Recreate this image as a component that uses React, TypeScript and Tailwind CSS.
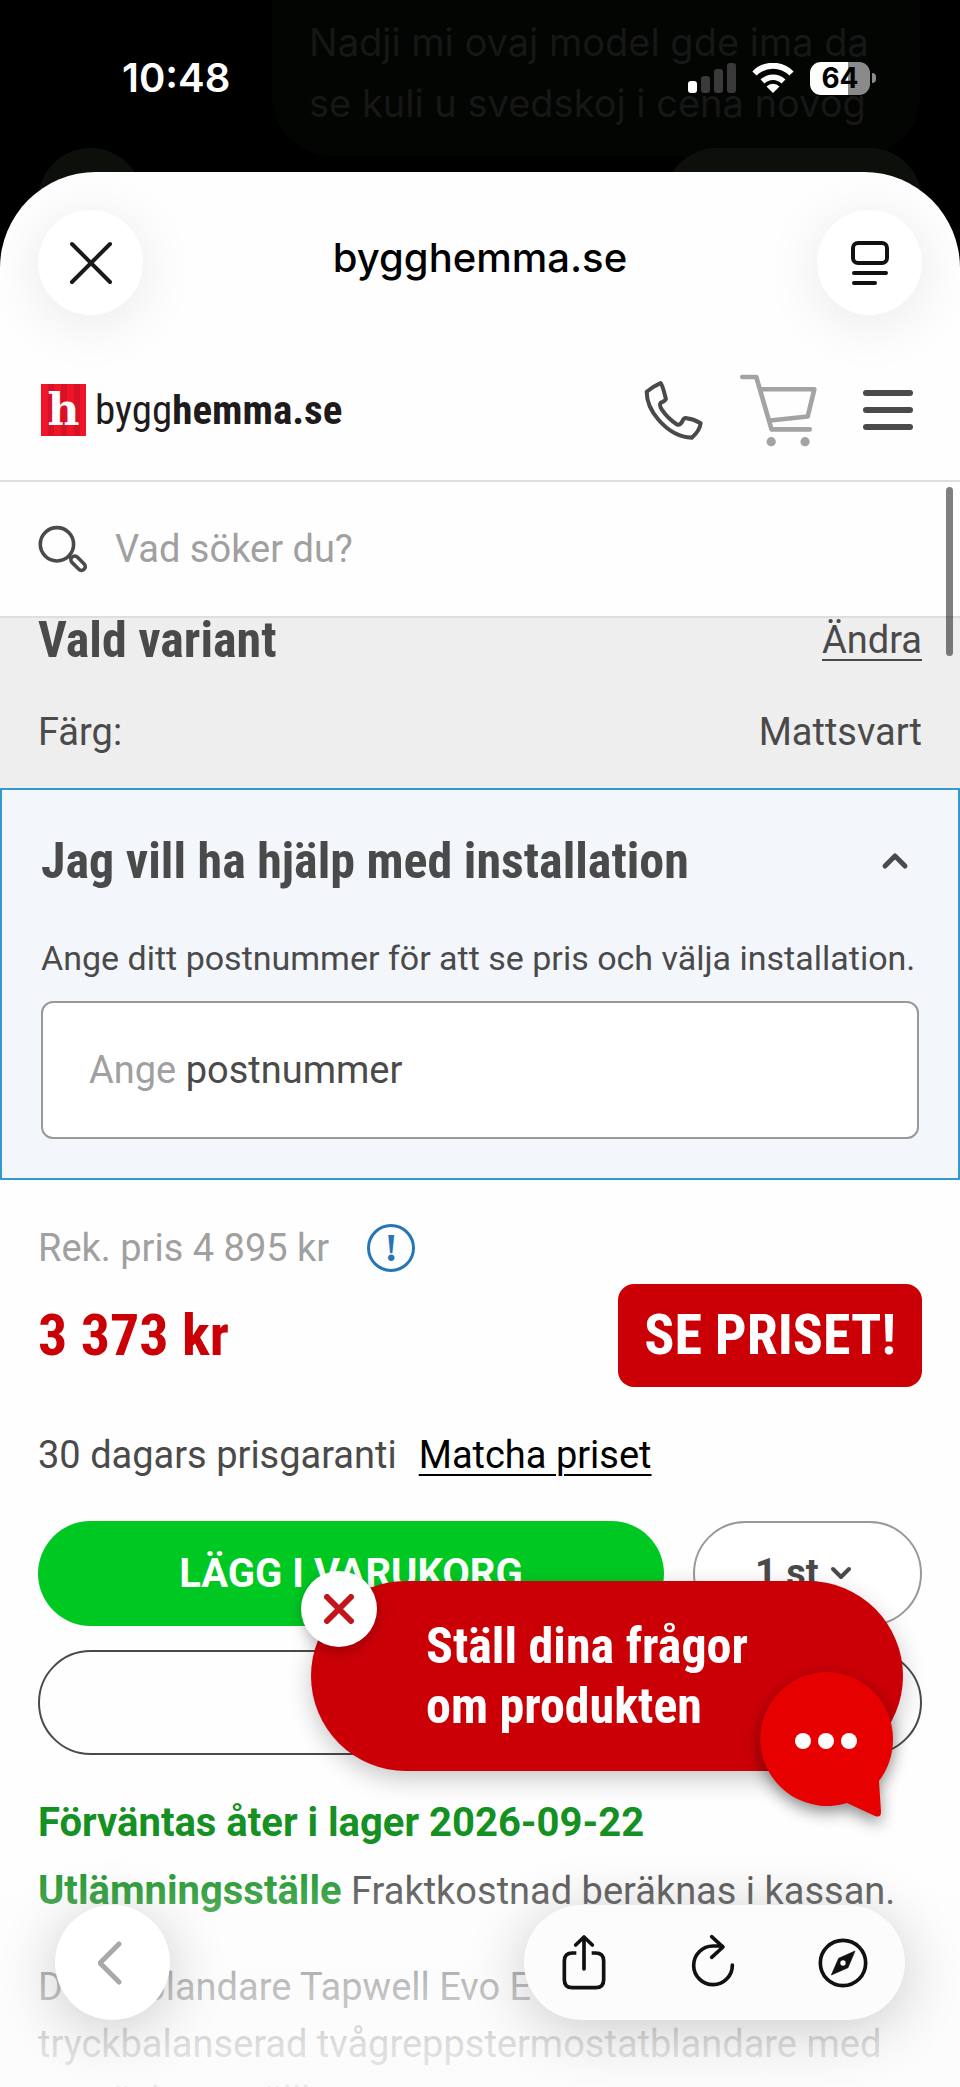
import type { ReactNode } from 'react';

const body = 'font-[Roboto,"Noto_Sans",sans-serif]';
const heading = 'font-["Roboto_Condensed",Roboto,sans-serif] font-bold';
const system = 'font-[Inter,Roboto,sans-serif]';

const backdropLines = ['Nadji mi ovaj model gde ima da', 'se kuli u svedskoj i cena novog'];

function StatusBar() {
  return (
    <div className={`${system} relative flex items-center justify-between pt-12 pr-[84px] pl-[122px] text-white`}>
      <span className="text-[40px] leading-[60px] font-semibold">10:48</span>
      <div className="flex items-center gap-4">
        <svg width="48" height="30" viewBox="0 0 48 30" aria-hidden="true">
          <rect x="0" y="18" width="9" height="12" rx="3" fill="#fff" />
          <rect x="13" y="13" width="9" height="17" rx="3" fill="#3a3a3a" />
          <rect x="26" y="6" width="9" height="24" rx="3" fill="#3a3a3a" />
          <rect x="39" y="0" width="9" height="30" rx="3" fill="#3a3a3a" />
        </svg>
        <svg width="42" height="30" viewBox="0 0 42 30" aria-hidden="true">
          <path d="M21 30l-6.500-6.500a9 9 0 0 1 13 0z" fill="#fff" />
          <path d="M10.500 18.500a15 15 0 0 1 21 0" fill="none" stroke="#fff" strokeWidth="5.500" />
          <path d="M2.500 10.500a26 26 0 0 1 37 0" fill="none" stroke="#fff" strokeWidth="6" />
        </svg>
        <div className="flex items-center gap-[2px]">
          <span className="h-[33px] w-[60px] rounded-[11px] bg-linear-to-r from-white from-64% to-[#8a8a8a] to-64% text-center text-[28px] leading-[33px] font-bold text-black">
            64
          </span>
          <span className="h-[10px] w-1 rounded-r-full bg-[#8a8a8a]" />
        </div>
      </div>
    </div>
  );
}

function Backdrop() {
  return (
    <div className={`${system} absolute inset-x-0 top-0 h-[300px] bg-black`} aria-hidden="true">
      <div className="mr-10 ml-[272px] rounded-b-[60px] bg-[#020502] px-[37px] pt-3 pb-[22px] text-[38px] leading-[61px] text-[#161716]">
        {backdropLines.map((line) => (
          <p key={line} className="whitespace-nowrap">
            {line}
          </p>
        ))}
      </div>
      <div className="mt-[-8px] flex justify-between px-[38px]">
        <span className="size-[105px] rounded-full bg-[#0c0f0a]" />
        <span className="h-[105px] w-[258px] rounded-full bg-[#0c0f0a]" />
      </div>
    </div>
  );
}

function GlassButton({ label, className, children }: { label: string; className: string; children: ReactNode }) {
  return (
    <button
      type="button"
      aria-label={label}
      className={`flex items-center justify-center rounded-full bg-white ${className}`}
    >
      {children}
    </button>
  );
}

function BrowserBar() {
  return (
    <div className="flex h-[168px] items-start justify-between px-[38px] pt-[38px]">
      <GlassButton label="Stäng" className="size-[105px] shadow-[0_8px_60px_rgba(0,0,0,0.09)]">
        <svg width="44" height="44" viewBox="0 0 44 44" fill="none" stroke="#1a1a1a" strokeWidth="4" strokeLinecap="round">
          <path d="M3 3l38 38M41 3L3 41" />
        </svg>
      </GlassButton>
      <h1 className={`${system} text-[40px] leading-[96px] font-medium text-black`}>bygghemma.se</h1>
      <GlassButton label="Läsläge" className="size-[105px] shadow-[0_8px_60px_rgba(0,0,0,0.09)]">
        <svg width="38" height="44" viewBox="0 0 38 44" fill="none" stroke="#111" strokeWidth="4" strokeLinecap="round">
          <rect x="2" y="2" width="34" height="20" rx="5" />
          <path d="M3 32h32M3 42h21" />
        </svg>
      </GlassButton>
    </div>
  );
}

function SiteHeader() {
  return (
    <header className="flex h-[142px] items-center justify-between border-b-2 border-[#dedede] pr-[47px] pl-[41px]">
      <a href="#" className="flex items-center gap-[9px] text-[#1f1b1c]">
        <span className='h-[52px] w-[45px] bg-[repeating-linear-gradient(90deg,#f01428_0_7px,#d81226_7px_13px)] text-center font-["DejaVu_Serif",serif] text-[44px] leading-[52px] font-bold text-white'>
          h
        </span>
        <span className='font-["Roboto_Condensed",Roboto,sans-serif] text-[41px] leading-[52px]'>
          bygg<b>hemma.se</b>
        </span>
      </a>
      <nav className="flex items-center">
        <a href="#" aria-label="Ring oss">
          <svg width="60" height="60" viewBox="492 122 178 178" fill="none" stroke="#4a4a4a" strokeWidth="12" strokeLinejoin="round">
            <path d="M500 157Q518 141 541 131Q546 134 557 178Q555 184 542 189Q536 196 545 210Q563 237 590 254Q600 257 606 244Q609 236 615 235Q640 238 660 250Q658 272 634 293Q580 292 535 240Q500 200 500 157Z" />
          </svg>
        </a>
        <a href="#" aria-label="Varukorg" className="ml-[35px]">
          <svg width="79" height="75" viewBox="778 92 236 226" fill="none" stroke="#a3a3a3" strokeWidth="14" strokeLinecap="round" strokeLinejoin="round">
            <path d="M787 104h42l46 158h115M846 141h158l-20 82-113 12" />
            <circle cx="874" cy="299" r="14" fill="#a3a3a3" stroke="none" />
            <circle cx="976" cy="299" r="14" fill="#a3a3a3" stroke="none" />
          </svg>
        </a>
        <button type="button" aria-label="Meny" className="ml-[45px] flex flex-col gap-[11px]">
          <span className="h-[6px] w-[50px] rounded-full bg-[#4a4a4a]" />
          <span className="h-[6px] w-[50px] rounded-full bg-[#4a4a4a]" />
          <span className="h-[6px] w-[50px] rounded-full bg-[#4a4a4a]" />
        </button>
      </nav>
    </header>
  );
}

function SearchBar() {
  return (
    <form className="flex h-[136px] items-center gap-[28px] border-b-2 border-[#dedede] px-[38px]">
      <svg width="49" height="48" viewBox="112 555 150 145" fill="none" stroke="#4a4a4a" strokeWidth="11" aria-hidden="true">
        <circle cx="170" cy="613" r="51" />
        <path d="M206 649l8 8" />
        <rect x="208" y="660" width="52" height="23" rx="11" transform="rotate(45 235 672)" />
      </svg>
      <input
        type="search"
        aria-label="Sök"
        placeholder="Vad söker du?"
        className="min-w-0 flex-1 text-[38px] leading-[48px] outline-none placeholder:text-[#a0a0a0] placeholder:opacity-100"
      />
    </form>
  );
}

function VariantSection() {
  return (
    <section className="bg-[#eeeeee] px-[38px] pb-7 text-[38px]">
      <div className="flex items-center justify-between">
        <h2 className={`${heading} text-[50px] leading-[44px]`}>Vald variant</h2>
        <a href="#" className="leading-[44px] underline decoration-2 underline-offset-[6px]">
          Ändra
        </a>
      </div>
      <dl className="mt-[42px] flex justify-between leading-[56px]">
        <dt>Färg:</dt>
        <dd>Mattsvart</dd>
      </dl>
    </section>
  );
}

function InstallationSection() {
  return (
    <section className="border-2 border-[#3499cf] bg-[#f3f7fc] px-[39px] pt-[41px] pb-[39px]">
      <button type="button" className="flex w-full items-center justify-between pr-[10px]">
        <span className={`${heading} text-[50px] leading-[60px]`}>Jag vill ha hjälp med installation</span>
        <svg width="28" height="18" viewBox="0 0 28 18" fill="none" stroke="#4a4a4a" strokeWidth="5" strokeLinecap="round" strokeLinejoin="round">
          <path d="M4 14L14 4l10 10" />
        </svg>
      </button>
      <p className="mt-11 text-[34px] leading-[46px] whitespace-nowrap">
        Ange ditt postnummer för att se pris och välja installation.
      </p>
      <label className="mt-5 flex h-[138px] items-center gap-[10px] rounded-xl border-2 border-[#999] bg-white px-[46px] text-[38px]">
        <span className="whitespace-nowrap">
          <span className="text-[#a0a0a0]">Ange</span> postnummer
        </span>
        <input type="text" inputMode="numeric" className="min-w-0 flex-1 outline-none" />
      </label>
    </section>
  );
}

function PriceSection() {
  return (
    <section className="px-[38px] pt-11 text-[38px]">
      <div className="flex h-12 items-center gap-[38px] text-[#a0a0a0]">
        <span>Rek. pris 4 895 kr</span>
        <button
          type="button"
          aria-label="Om priset"
          className='size-[48px] rounded-full border-3 border-[#2575b8] font-["Liberation_Serif",serif] text-[40px] leading-[40px] font-bold text-[#2575b8]'
        >
          !
        </button>
      </div>
      <div className={`${heading} mt-3 flex h-[103px] items-center justify-between`}>
        <span className="text-[58px] text-[#cb0007]">3 373 kr</span>
        <a href="#" className="rounded-2xl bg-[#cb0007] px-[26px] text-[56px] leading-[103px] text-white">
          SE PRISET!
        </a>
      </div>
      <p className="mt-11 flex gap-[22px] leading-[48px]">
        30 dagars prisgaranti
        <a href="#" className="text-black underline decoration-2 underline-offset-[6px]">
          Matcha priset
        </a>
      </p>
      <div className="mt-[42px] flex gap-[29px]">
        <button type="button" className="h-[105px] flex-1 rounded-full bg-[#00c823] text-[40px] font-bold text-white">
          LÄGG I VARUKORG
        </button>
        <div className="relative">
          <select
            aria-label="Antal"
            className="h-[105px] w-[229px] appearance-none rounded-full border-2 border-[#999] bg-white pl-[60px] font-bold"
          >
            <option>1 st</option>
            <option>2 st</option>
            <option>3 st</option>
          </select>
          <svg className="pointer-events-none absolute top-[44px] right-[70px]" width="22" height="16" viewBox="0 0 22 16" fill="none" stroke="#4a4a4a" strokeWidth="4" strokeLinecap="round" strokeLinejoin="round">
            <path d="M3 4l8 8 8-8" />
          </svg>
        </div>
      </div>
      <button type="button" aria-label="Spara produkten" className="mt-6 block h-[105px] w-full rounded-full border-2 border-[#4a4a4a]" />
      <p className="mt-10 text-[40px] leading-[56px] font-bold text-[#149122]">Förväntas åter i lager 2026-09-22</p>
      <p className="mt-3 leading-[56px] whitespace-nowrap">
        <a href="#" className="text-[40px] font-bold text-[#149122]">
          Utlämningsställe
        </a>{' '}
        Fraktkostnad beräknas i kassan.
      </p>
      <p className="mt-10 leading-[57px]">
        Duschblandare Tapwell Evo EVM168 är en tryckbalanserad tvågreppstermostatblandare med omväxlare, ställbar
      </p>
    </section>
  );
}

function ChatTeaser() {
  return (
    <aside className="absolute right-[57px] bottom-[316px]">
      <button
        type="button"
        className={`${heading} h-[190px] w-[592px] rounded-full bg-[#cb0007] pl-[115px] text-left text-[50px] leading-[60px] text-white shadow-[0_8px_24px_rgba(0,0,0,0.22)]`}
      >
        Ställ dina frågor
        <br />
        om produkten
      </button>
      <button
        type="button"
        aria-label="Stäng chatt"
        className="absolute top-[-10px] left-[-10px] flex size-[76px] items-center justify-center rounded-full bg-white shadow-[0_4px_14px_rgba(0,0,0,0.25)]"
      >
        <svg width="30" height="30" viewBox="0 0 30 30" fill="none" stroke="#c4141c" strokeWidth="6" strokeLinecap="round">
          <path d="M3 3l24 24M27 3L3 27" />
        </svg>
      </button>
      <button type="button" aria-label="Öppna chatt" className="absolute right-[10px] bottom-[-48px] drop-shadow-[0_6px_8px_rgba(0,0,0,0.45)]">
        <svg width="134" height="147" viewBox="0 0 134 147">
          <path
            d="M67 0a67 67 0 0 1 67 67c0 16-5 30-14 42l2 31q0 6-6 4l-28-13A67 67 0 1 1 67 0z"
            fill="#e60000"
          />
          <circle cx="44" cy="69" r="8" fill="#fff" />
          <circle cx="67" cy="69" r="8" fill="#fff" />
          <circle cx="90" cy="69" r="8" fill="#fff" />
        </svg>
      </button>
    </aside>
  );
}

function BottomToolbar() {
  return (
    <div className="absolute inset-x-0 bottom-0 flex h-[240px] items-end justify-between bg-[linear-gradient(180deg,rgba(251,251,251,0),rgba(251,251,251,0.2)_22%,rgba(251,251,251,0.66)_58%,rgba(251,251,251,0.84)_85%,rgba(251,251,251,0.9))] px-[55px] pb-[67px]">
      <GlassButton label="Tillbaka" className="size-[115px] shadow-[0_8px_60px_rgba(0,0,0,0.2)]">
        <svg width="30" height="44" viewBox="0 0 30 44" fill="none" stroke="#a8a8a8" strokeWidth="5" strokeLinecap="round" strokeLinejoin="round">
          <path d="M21 3L2 22l19 19" />
        </svg>
      </GlassButton>
      <div className="flex h-[115px] w-[381px] items-center justify-between rounded-full bg-[#fcfcfc] px-[37px] shadow-[0_8px_60px_rgba(0,0,0,0.2)]">
        <button type="button" aria-label="Dela">
          <svg width="46" height="58" viewBox="244 460 138 174" fill="none" stroke="#111" strokeWidth="11" strokeLinecap="round" strokeLinejoin="round">
            <path d="M313 565V471M288 493l25-24 25 24" />
            <path d="M290 517h-12q-24 0-24 24v56q0 24 24 24h70q24 0 24-24v-56q0-24-24-24h-12" strokeLinecap="butt" />
          </svg>
        </button>
        <button type="button" aria-label="Ladda om">
          <svg width="48" height="58" viewBox="624 460 144 174" fill="none" stroke="#111" strokeWidth="11" strokeLinecap="round" strokeLinejoin="round">
            <path d="M754 553A58 58 0 1 1 696 496H724M692 468l34 31-34 31" />
          </svg>
        </button>
        <button type="button" aria-label="Öppna i webbläsare">
          <svg width="50" height="58" viewBox="1015 465 150 174" fill="none" stroke="#111" strokeWidth="11">
            <circle cx="1090" cy="552" r="68" />
            <path d="M1126 516l-21 50-50 22 22-50z" fill="#111" stroke="#111" strokeWidth="2" />
            <circle cx="1090" cy="552" r="8" fill="#fff" stroke="none" />
          </svg>
        </button>
      </div>
    </div>
  );
}

export default function App() {
  return (
    <div className={`${body} relative flex h-screen flex-col overflow-hidden bg-black text-[#4a4a4a]`}>
      <Backdrop />
      <StatusBar />
      <main className="relative mt-16 min-h-0 flex-1 overflow-hidden rounded-t-[96px] bg-[#fefefe]">
        <BrowserBar />
        <SiteHeader />
        <SearchBar />
        <VariantSection />
        <InstallationSection />
        <PriceSection />
        <span className="absolute top-[315px] right-[7px] h-[169px] w-[7px] rounded-full bg-black/50" />
      </main>
      <ChatTeaser />
      <BottomToolbar />
    </div>
  );
}
